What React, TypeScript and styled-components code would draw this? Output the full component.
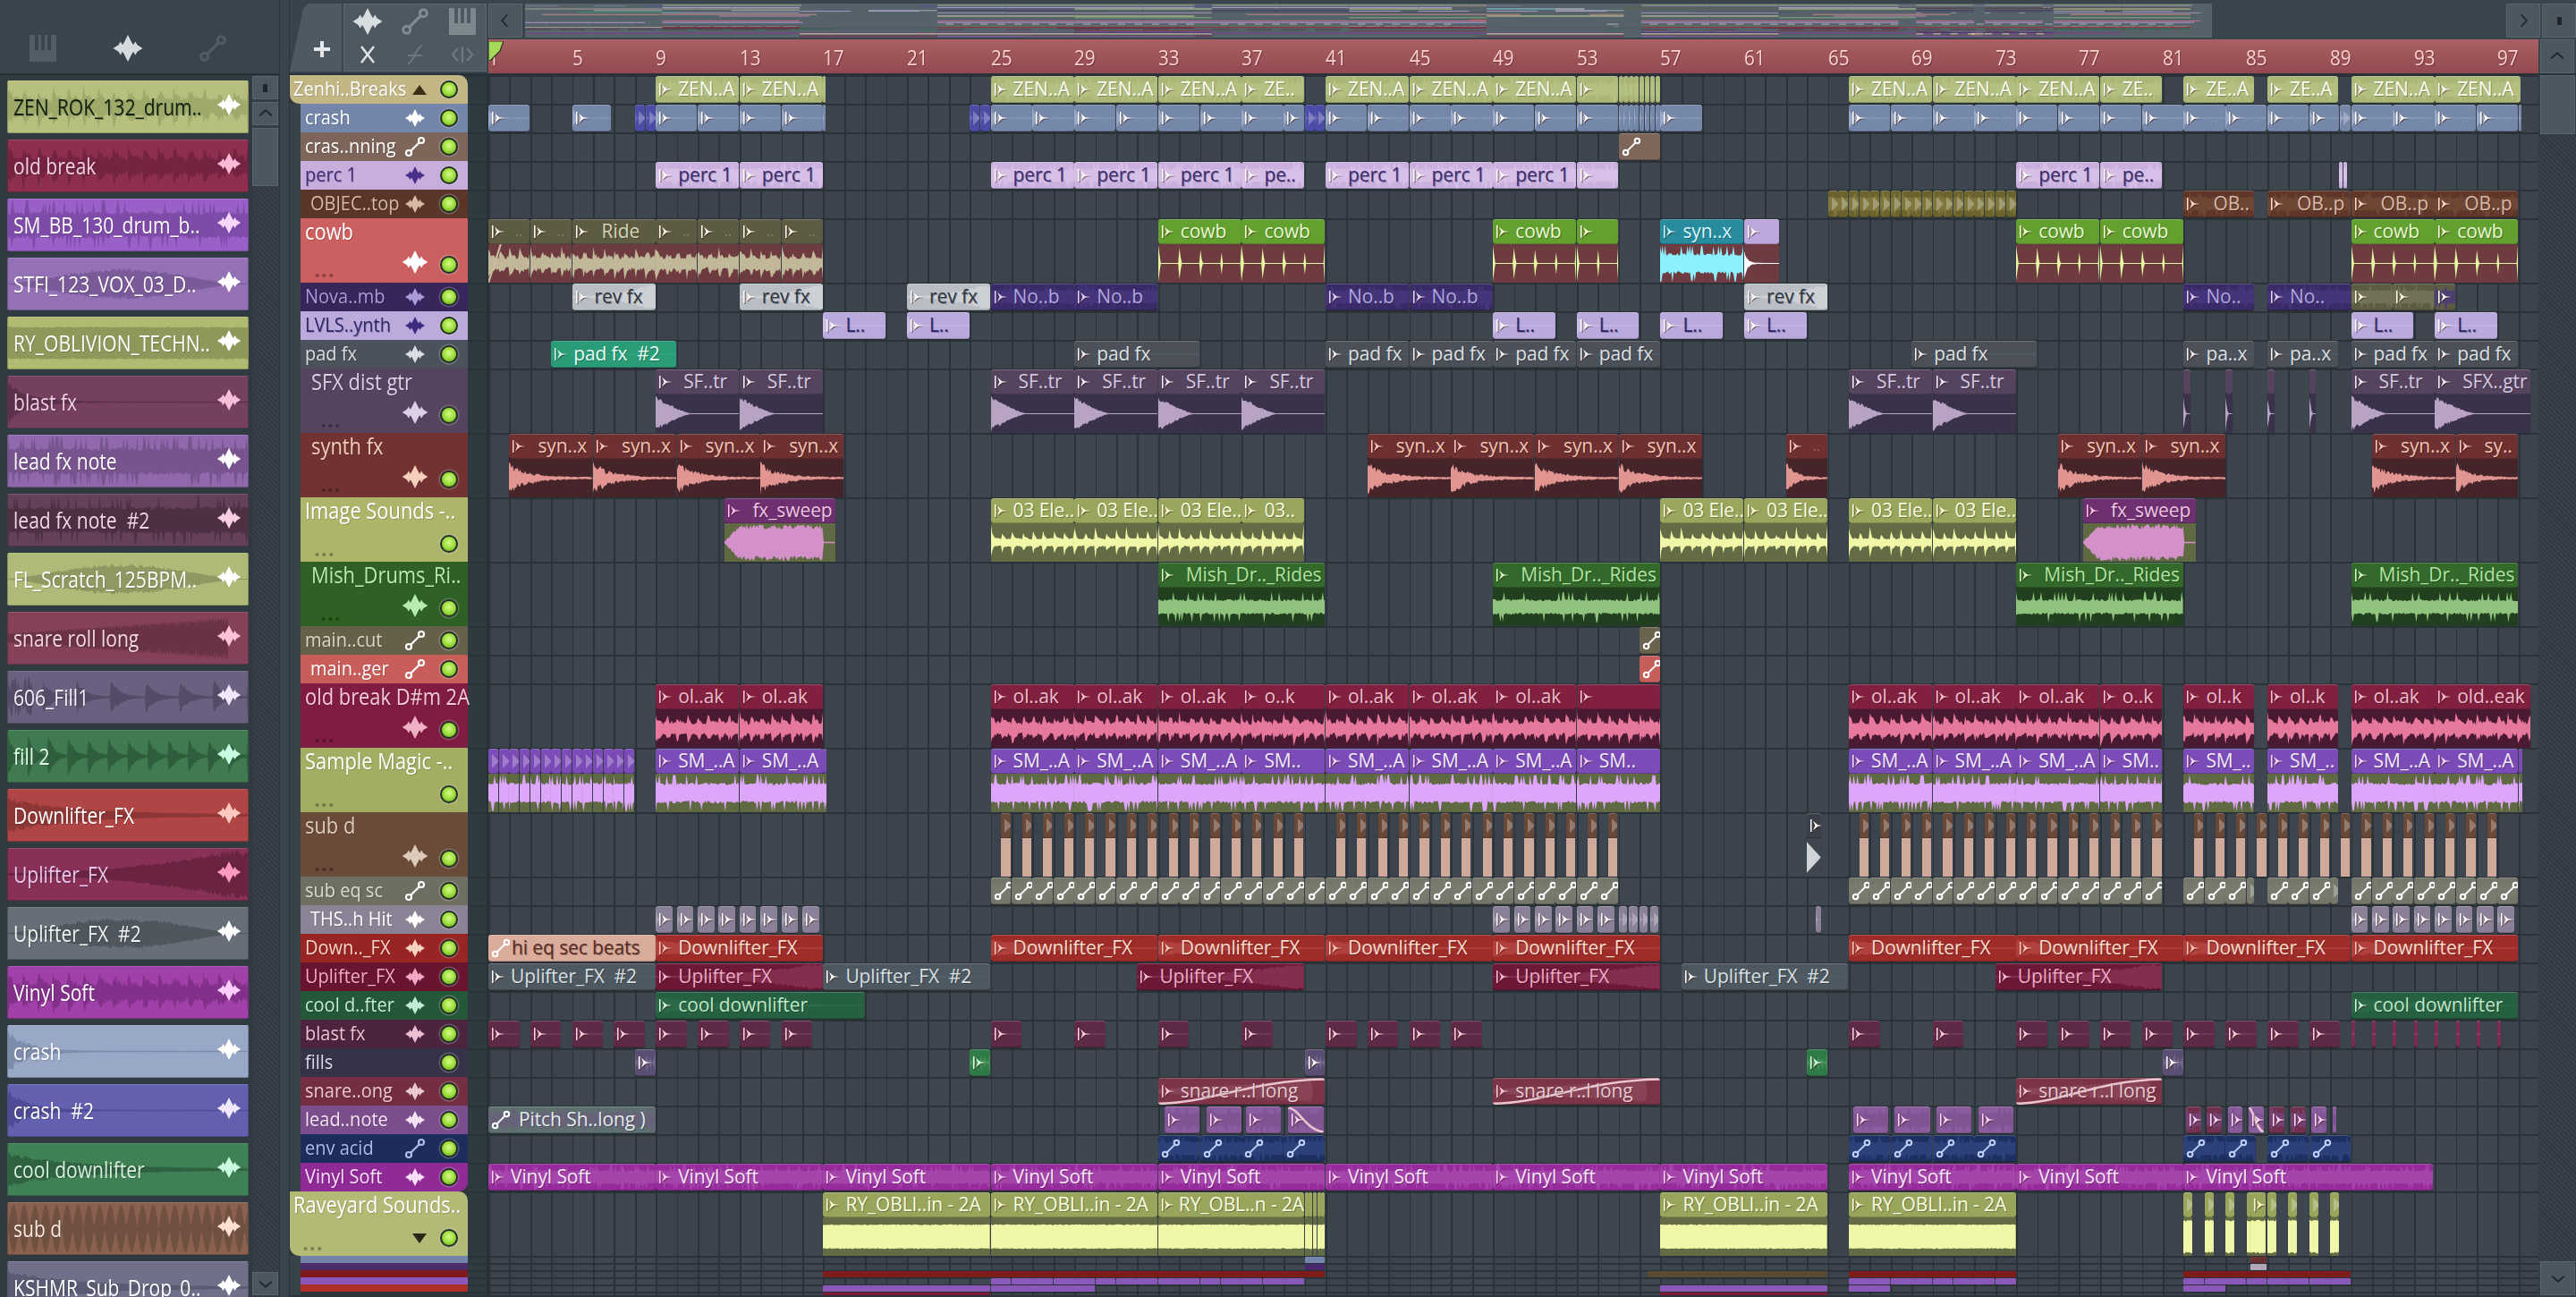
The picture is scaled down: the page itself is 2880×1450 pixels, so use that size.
import React from 'react';
import styled, { createGlobalStyle } from 'styled-components';

const W = 23.4;
const FONT = `"Open Sans", "Noto Sans", sans-serif`;

const Global = createGlobalStyle`
  html, body { margin: 0; padding: 0; background: #2c353c; overflow: hidden; }
  #root { width: 2880px; height: 1450px; }
`;

type Clip = { s: number; l: number; t?: string; c?: string; b?: string; w?: string; k?: string; wo?: number; fg?: string; ic?: string; auto?: boolean; curve?: string; pad?: number; };
type Track = { name: string; bg: string; fg: string; icon?: string; tint?: string; h: number; indent?: number; group?: string; round?: boolean; d?: Partial<Clip>; clips: Clip[]; };

const runs = (starts: number[], l: number, t?: string, o?: Partial<Clip>): Clip[] => starts.map((s) => ({ s, l, t, ...o }));
const fill = (from: number, to: number, step: number, t?: string, o?: Partial<Clip>, l?: number): Clip[] => {
  const out: Clip[] = [];
  for (let s = from; s < to - 0.001; s += step) out.push({ s, l: l ?? step, t, ...o });
  return out;
};

const rnd = (seed: number) => () => {
  seed = (seed + 0x6d2b79f5) | 0;
  let t = Math.imul(seed ^ (seed >>> 15), 1 | seed);
  t = (t + Math.imul(t ^ (t >>> 7), 61 | t)) ^ t;
  return ((t ^ (t >>> 14)) >>> 0) / 4294967296;
};

const ampOf = (k: string, x: number, r: number, bars: number) => {
  switch (k) {
    case 'noise': return 0.42 + 0.18 * r + (r > 0.84 ? 0.42 * r : 0);
    case 'mish': return 0.3 + 0.14 * r + (r > 0.9 ? 0.4 * r : 0);
    case 'pump': { const f = (x * bars * 2) % 1; return (0.34 + 0.66 * Math.exp(-f * 3)) * (0.5 + 0.5 * r); }
    case 'imgs': { const f = (x * bars * 2) % 1; return (0.24 + 0.76 * Math.exp(-f * 7)) * (0.65 + 0.35 * r); }
    case 'decay': return (0.025 + 0.97 * Math.max(0, 1 - x / 0.42) ** 1.3) * (0.72 + 0.28 * r);
    case 'crash': return (0.03 + 0.9 * Math.exp(-x * 12)) * (0.65 + 0.35 * r);
    case 'synth': return (0.06 + 0.88 * Math.exp(-x * 4.4)) * (0.45 + 0.55 * r);
    case 'thin': return 0.025;
    case 'rise': return Math.min(1, 0.06 + x * x * 1.1) * (0.75 + 0.25 * r);
    case 'bump': return Math.sin(Math.PI * Math.min(1, x * 1.05)) ** 1.4 * (0.75 + 0.25 * r) * 0.62 + 0.02;
    case 'sweep': return x > 0.89 ? 0.04 : Math.min(1, x * 7 + 0.05) * (0.72 + 0.28 * r);
    case 'block': return 0.62 + 0.05 * r;
    case 'solid': return 0.82 + 0.1 * r;
    case 'ticks': { const f = (x * bars) % 1; return f < 0.09 ? 0.95 * (1 - f * 9) + 0.03 : 0.03; }
    case 'fills': { const f = (x * 12) % 1; return (0.02 + 0.9 * Math.exp(-f * 3.2)) * (0.7 + 0.3 * r); }
    case 'bursts': { const f = (x * 7) % 1; return x < 0.1 ? 0.75 * r + 0.2 : (0.03 + 0.75 * Math.exp(-f * 4)) * (0.7 + 0.3 * r); }
    case 'sine': return Math.abs(Math.sin(x * 70)) * 0.98;
    case 'roll': return x > 0.92 ? 0 : (0.2 + x * 0.75) * (0.6 + 0.4 * Math.abs(Math.sin(x * 260)));
    case 'down': return (0.03 + 0.7 * Math.exp(-x * 3.2)) * (0.7 + 0.3 * r);
    default: return 0.5;
  }
};

const WaveSvg = styled.svg`
  position: absolute;
  inset: 0;
  width: 100%;
  height: 100%;
  display: block;
  pointer-events: none;
`;

const Wave = ({ k, color, px, seed, bars = 4, opacity = 1 }: { k: string; color: string; px: number; seed: number; bars?: number; opacity?: number }) => {
  const n = Math.max(4, Math.min(260, Math.round(px / 1.4)));
  const r = rnd(seed * 7919 + 13);
  let top = '';
  let bot = '';
  for (let i = 0; i <= n; i++) {
    const x = i / n;
    const a = Math.min(1, ampOf(k, x, r(), bars));
    const b = Math.min(1, ampOf(k, x, r(), bars));
    top += `L${(x * 100).toFixed(2)} ${(50 - a * 48).toFixed(1)}`;
    bot = `L${(x * 100).toFixed(2)} ${(50 + b * 48).toFixed(1)}` + bot;
  }
  return (
    <WaveSvg viewBox="0 0 100 100" preserveAspectRatio="none" opacity={opacity}>
      <path d={`M0 50${top}${bot}Z`} fill={color} />
    </WaveSvg>
  );
};

const ArrowGlyph = ({ color, size = 16 }: { color: string; size?: number }) => (
  <svg width={size} height={size} viewBox="0 0 16 16" style={{ flex: 'none', filter: 'drop-shadow(1px 1px 0 rgba(60,20,10,.55))' }}>
    <path d="M1 1 H2.6 V15 H1 Z" fill={color} />
    <path d="M4 2.8 L9.4 7.2 L15.5 8 L9.4 8.8 L4 13.2 L6.4 8 Z" fill={color} />
  </svg>
);

const AutoGlyph = ({ color, size = 22 }: { color: string; size?: number }) => (
  <svg width={size} height={size} viewBox="0 0 24 24" fill="none" stroke={color} strokeWidth={2.2} style={{ flex: 'none' }}>
    <circle cx="5" cy="19" r="3" />
    <circle cx="19" cy="5" r="3" />
    <path d="M7.2 16.8 L16.8 7.2" />
  </svg>
);

const SampleGlyph = ({ color, w = 22, h = 20 }: { color: string; w?: number; h?: number }) => (
  <svg width={w} height={h} viewBox="0 0 44 40" style={{ flex: 'none' }}>
    <path d="M0 20 L8 15 L11 10 L14 15 L17 10 L22 0 L27 10 L30 15 L33 10 L36 15 L44 20 L36 25 L33 30 L30 25 L27 30 L22 40 L17 30 L14 25 L11 30 L8 25 Z" fill={color} />
  </svg>
);

const PianoGlyph = ({ color, bg }: { color: string; bg: string }) => (
  <svg width="30" height="30" viewBox="0 0 30 30" style={{ flex: 'none' }}>
    <rect width="30" height="30" fill={color} />
    <rect x="6" y="0" width="4" height="17" fill={bg} />
    <rect x="13" y="0" width="4" height="17" fill={bg} />
    <rect x="20" y="0" width="4" height="17" fill={bg} />
  </svg>
);

const olive = { c: '#5d5b41', b: '#6e3b40', w: '#c0b898', k: 'pump', fg: '#d8d4b8', ic: '#fbfaf0' };
const cowG = { c: '#62a02f', b: '#6e3b40', w: '#e6f8a0', k: 'ticks', fg: '#e8f8d0', ic: '#f8ffd8' };
const subAuto = { auto: true };
const greyPad = { c: '#4b5059', fg: '#dde0e4', ic: '#eef0f2', w: '#697079', k: 'thin', wo: 0.9 };
const mutedCrash = { c: '#4a4ca6', w: '#6a6cc0', k: 'crash' };
const noB = { c: '#3a2a68', fg: '#b0a8e0', ic: '#d8d0f8', w: '#4a3880', k: 'noise' };
const rev = { c: '#b9bdc4', fg: '#2e3640', ic: '#fdfdfd', w: '#d2d5da', k: 'rise' };

const TRACKS: Track[] = [
  { name: 'Zenhi..Breaks', bg: '#c3b685', fg: '#fff', h: 32, group: 'up', d: { c: '#a9b676', w: '#bcc78a', k: 'noise', wo: 0.6, fg: '#fdfdf0', ic: '#fff' }, clips: [
    ...runs([8, 12], 4, 'ZEN..A'), { s: 16, l: 0.12 }, ...runs([24, 28, 32], 4, 'ZEN..A'), { s: 36, l: 3, t: 'ZE..' }, ...runs([40, 44, 48], 4, 'ZEN..A'), { s: 52, l: 2 }, ...fill(54, 56, 0.25),
    ...runs([65, 69, 73], 4, 'ZEN..A'), { s: 77, l: 3, t: 'ZE..' }, { s: 81, l: 3.4, t: 'ZE..A' }, { s: 85, l: 3.4, t: 'ZE..A' }, { s: 89, l: 4, t: 'ZEN..A' }, { s: 93, l: 4.1, t: 'ZEN..A' }] },
  { name: 'crash', bg: '#7485aa', fg: '#fff', h: 32, icon: 'wave', tint: '#fff', d: { c: '#7688aa', w: '#a4b2cc', k: 'crash', fg: '#a5b2cc', ic: '#fff' }, clips: [
    { s: 0, l: 2, t: '..' }, { s: 4, l: 1.9, t: '..' }, ...runs([7, 7.5, 23, 23.5, 39, 39.5], 0.5, undefined, mutedCrash), ...runs([8, 10, 12, 14, 24, 26, 28, 30, 32, 34, 36], 2, '..'), { s: 16, l: 0.1 }, { s: 38, l: 1 },
    ...runs([40, 42, 44, 46, 48, 50, 52], 2, '..'), ...fill(54, 56, 0.25), { s: 56, l: 2, t: '..' }, ...fill(65, 87, 2, '..'), { s: 87, l: 1.45 }, { s: 88.45, l: 0.55 }, ...fill(89, 97, 2, '..'), { s: 97, l: 0.1 }] },
  { name: 'cras..nning', bg: '#7d655a', fg: '#fff', h: 32, icon: 'auto', tint: '#fff', clips: [{ s: 54, l: 2, c: '#7e6659', auto: true, ic: '#fff' }] },
  { name: 'perc 1', bg: '#c7aedc', fg: '#3c2a78', h: 32, icon: 'wave', tint: '#4a2f8a', d: { c: '#c9b0df', w: '#dcc8ec', k: 'noise', wo: 0.7, fg: '#3a2a72', ic: '#fff' }, clips: [
    ...runs([8, 12, 24, 28, 32, 40, 44, 48, 73], 4, 'perc 1'), { s: 36, l: 3, t: 'pe..' }, { s: 52, l: 2 }, { s: 77, l: 3, t: 'pe..' }, { s: 88.4, l: 0.2 }, { s: 88.65, l: 0.2 }] },
  { name: 'OBJEC..top', bg: '#5a3529', fg: '#d8b9a6', h: 32, indent: 11, icon: 'wave', tint: '#d8b9a6', d: { c: '#60362a', w: '#744a38', k: 'noise', fg: '#d8b9a6', ic: '#ffd9c8', pad: 8 }, clips: [
    ...fill(64, 73, 0.5, undefined, { c: '#6a632e', w: '#857c40' }), { s: 81, l: 3.4, t: 'OB..' }, { s: 85, l: 4, t: 'OB..p' }, { s: 89, l: 4, t: 'OB..p' }, { s: 93, l: 4, t: 'OB..p' }] },
  { name: 'cowb', bg: '#cc6060', fg: '#fff', h: 72, icon: 'wave', tint: '#fff', d: olive, clips: [
    { s: 0, l: 2, t: '..', curve: 'slash' }, { s: 2, l: 2, t: '..' }, { s: 4, l: 4, t: 'Ride', pad: 8 }, ...runs([8, 10, 12, 14], 2, '..'),
    ...runs([32, 36, 48, 73, 77, 89, 93], 4, 'cowb', cowG), { s: 52, l: 2, ...cowG },
    { s: 56, l: 4, t: 'syn..x', c: '#288c9e', fg: '#d8f8ff', ic: '#c8f8ff', w: '#8df0ff', k: 'noise' }, { s: 60, l: 1.7, c: '#bea7dc', w: '#fff', k: 'crash', ic: '#fff' }] },
  { name: 'Nova..mb', bg: '#37255c', fg: '#aa9cd8', h: 32, icon: 'wave', tint: '#aa9cd8', d: noB, clips: [
    ...runs([4, 12, 20, 60], 4, 'rev fx', rev), ...runs([24, 28, 40, 44], 4, 'No..b'), { s: 81, l: 3.4, t: 'No..' }, { s: 85, l: 4, t: 'No..' },
    ...runs([89, 91], 2, undefined, { c: '#5c5c44', w: '#787860', ic: '#fdfde8' }), { s: 93, l: 1, c: '#5c5c44', ic: '#fdfde8' }] },
  { name: 'LVLS..ynth', bg: '#bbaadb', fg: '#2a2466', h: 32, icon: 'wave', tint: '#3c2c80', d: { c: '#b9a9dc', w: '#d2c6ea', k: 'crash', fg: '#2b2468', ic: '#fff' }, clips: runs([16, 20, 48, 52, 56, 60, 89, 93], 3, 'L..') },
  { name: 'pad fx', bg: '#4c525c', fg: '#dadde2', h: 32, icon: 'wave', tint: '#dadde2', d: greyPad, clips: [
    { s: 3, l: 6, t: 'pad fx  #2', c: '#2a9c78', fg: '#e8fff6', ic: '#c8fff0', w: '#46b892' }, { s: 28, l: 6, t: 'pad fx' }, ...runs([40, 44, 48, 52], 4, 'pad fx'), { s: 68, l: 6, t: 'pad fx' }, { s: 81, l: 3.4, t: 'pa..x' }, { s: 85, l: 3.4, t: 'pa..x' }, ...runs([89, 93], 4, 'pad fx')] },
  { name: 'SFX dist gtr', bg: '#56445f', fg: '#dccfe6', h: 72, indent: 12, icon: 'wave', tint: '#dccfe6', d: { c: '#56445f', b: '#39324a', w: '#b9a3c4', k: 'decay', fg: '#d6c9e2', ic: '#f4ecff', pad: 6 }, clips: [
    ...runs([8, 12, 24, 28, 32, 36, 65, 69, 89], 4, 'SF..tr'), { s: 93, l: 4.6, t: 'SFX..gtr' }, ...runs([81, 83, 85, 87], 0.35)] },
  { name: 'synth fx', bg: '#733232', fg: '#f4d0bc', h: 72, indent: 12, icon: 'wave', tint: '#f4d0bc', d: { c: '#6e3030', b: '#46252a', w: '#e29490', k: 'synth', fg: '#f0c4b4', ic: '#ffc8c0', pad: 7 }, clips: [
    ...runs([1, 5, 9, 13, 42, 46, 50, 54, 75, 79, 90], 4, 'syn..x'), { s: 62, l: 2, t: '..' }, { s: 94, l: 3, t: 'sy..' }] },
  { name: 'Image Sounds -..', bg: '#adb56a', fg: '#fff', h: 72, d: { c: '#9aa65c', b: '#646c45', w: '#f0f8a8', k: 'imgs', fg: '#f8fde0', ic: '#fdffd8' }, clips: [
    { s: 11.3, l: 5.3, t: 'fx_sweep', c: '#6e3070', fg: '#f0c4e4', ic: '#ffc0f0', w: '#d490c8', k: 'sweep', b: '#5f6a42', pad: 6 },
    ...runs([24, 28, 32, 56, 60, 65, 69], 4, '03 Ele..'), { s: 36, l: 3, t: '03..' },
    { s: 76.2, l: 5.4, t: 'fx_sweep', c: '#6e3070', fg: '#f0c4e4', ic: '#ffc0f0', w: '#d490c8', k: 'sweep', b: '#5f6a42', pad: 6 }] },
  { name: 'Mish_Drums_Ri..', bg: '#2f6024', fg: '#b8ecae', h: 72, indent: 12, icon: 'wave', tint: '#b8ecae', d: { c: '#33692a', b: '#22401f', w: '#90c47e', k: 'mish', fg: '#b0e4a0', ic: '#d0ffc0', pad: 6 }, clips: runs([32, 48, 73, 89], 8, 'Mish_Dr.._Rides') },
  { name: 'main..cut', bg: '#66604a', fg: '#dcd8c6', h: 32, icon: 'auto', tint: '#fff', clips: [{ s: 55, l: 1, c: '#6a644e', auto: true, ic: '#fff' }] },
  { name: 'main..ger', bg: '#c95d5a', fg: '#fff', h: 32, indent: 11, icon: 'auto', tint: '#fff', clips: [{ s: 55, l: 1, c: '#c65e5a', auto: true, ic: '#fff' }] },
  { name: 'old break D#m 2A', bg: '#801b41', fg: '#f4c8d4', h: 72, icon: 'wave', tint: '#f0b0c4', d: { c: '#822040', b: '#4a1a32', w: '#e6789c', k: 'pump', fg: '#f0bccc', ic: '#ffc0d8' }, clips: [
    ...runs([8, 12, 24, 28, 32, 40, 44, 48, 65, 69, 73, 89], 4, 'ol..ak'), { s: 36, l: 4, t: 'o..k' }, { s: 52, l: 4 }, { s: 77, l: 3, t: 'o..k' }, { s: 81, l: 3.4, t: 'ol..k' }, { s: 85, l: 3.4, t: 'ol..k' }, { s: 93, l: 4.6, t: 'old..eak' }] },
  { name: 'Sample Magic -..', bg: '#a3ae62', fg: '#fff', h: 72, d: { c: '#7b4cb8', b: '#5f6a42', w: '#dda6fa', k: 'noise', fg: '#f4e8ff', ic: '#f4d8ff' }, clips: [
    ...fill(0, 7, 0.5), ...runs([8, 12, 24, 28, 32, 40, 44, 48, 65, 69, 73, 89], 4, 'SM_..A'), ...runs([36, 52], 4, 'SM..'), { s: 16, l: 0.2 }, { s: 77, l: 3, t: 'SM..' }, { s: 81, l: 3.4, t: 'SM_..' }, { s: 85, l: 3.4, t: 'SM_..' }, { s: 93, l: 4, t: 'SM_..A' }, { s: 97, l: 0.2 }] },
  { name: 'sub d', bg: '#6a4a39', fg: '#dccabc', h: 72, icon: 'wave', tint: '#dccabc', d: { c: '#6a4838', b: '#cfa999', fg: '#fff', ic: '#92705c' }, clips: [
    ...fill(24.5, 39, 1, undefined, {}, 0.47), ...fill(40.5, 54, 1, undefined, {}, 0.47), ...fill(65.5, 80, 1, undefined, {}, 0.47), ...fill(81.5, 96, 1, undefined, {}, 0.47),
    { s: 63, l: 0.7, c: '#3b4048', b: '#3e4650', k: 'tri', ic: '#fff' }] },
  { name: 'sub eq sc', bg: '#6e6e62', fg: '#dcdcce', h: 32, icon: 'auto', tint: '#fff', d: { ...subAuto, c: '#74766a', ic: '#fff', w: '#85877a', k: 'noise', wo: 0.5 }, clips: [
    ...fill(24, 54, 1), ...fill(65, 80, 1), ...runs([81, 82, 83, 85, 86, 87], 1), ...runs([84, 88], 0.4), ...fill(89, 97, 1)] },
  { name: 'THS..h Hit', bg: '#8c8296', fg: '#fff', h: 32, indent: 11, icon: 'wave', tint: '#fff', d: { c: '#8a8198', ic: '#fff', w: '#aaa2b6', k: 'crash' }, clips: [
    ...fill(8, 16, 1, undefined, {}, 0.82), ...fill(48, 54, 1, undefined, {}, 0.82), ...fill(54, 56, 0.5, undefined, {}, 0.42), { s: 63.4, l: 0.3 }, ...fill(89, 97, 1, undefined, {}, 0.82)] },
  { name: 'Down.._FX', bg: '#982424', fg: '#f8d4c4', h: 32, icon: 'wave', tint: '#f8d4c4', d: { c: '#a02c2a', w: '#b84a44', k: 'down', wo: 0.7, fg: '#f8dccc', ic: '#ffc4b8' }, clips: [
    { s: 0, l: 8, t: 'hi eq sec beats', auto: true, c: '#d9ac9c', fg: '#5a2a22', ic: '#fff' }, ...runs([8, 24, 32, 40, 48, 65, 73, 81, 89], 8, 'Downlifter_FX')] },
  { name: 'Uplifter_FX', bg: '#6a1530', fg: '#f4a8c8', h: 32, icon: 'wave', tint: '#f4a8c8', d: { c: '#6e1838', w: '#8a3455', k: 'rise', fg: '#f0a8c4', ic: '#ffb8d8' }, clips: [
    ...runs([0, 16, 57], 8, 'Uplifter_FX  #2', { c: '#4e5860', w: '#667078', k: 'thin', fg: '#d8e0e4', ic: '#fff' }), ...runs([8, 31, 48, 72], 8, 'Uplifter_FX')] },
  { name: 'cool d..fter', bg: '#24583a', fg: '#c4ecd4', h: 32, icon: 'wave', tint: '#c4ecd4', d: { c: '#256040', w: '#2e6c48', k: 'down', fg: '#bfe8c8', ic: '#c8ffe0' }, clips: [{ s: 8, l: 10, t: 'cool downlifter' }, { s: 89, l: 8, t: 'cool downlifter' }] },
  { name: 'blast fx', bg: '#4d2440', fg: '#ecc0d0', h: 32, icon: 'wave', tint: '#ecc0d0', d: { c: '#5e2a48', ic: '#ffd0e0', w: '#a87090', k: 'thin' }, clips: [
    ...runs([0, 2, 4, 6, 8, 10, 12, 14, 24, 28, 32, 36, 40, 42, 44, 46, 65, 69, 73, 75, 77, 79, 81, 83, 85, 87], 1.5), ...fill(89, 97, 1, undefined, { c: '#7c2a50' }, 0.2)] },
  { name: 'fills', bg: '#363248', fg: '#dcdce4', h: 32, d: { c: '#5a4e72', ic: '#fff', w: '#7a6e92', k: 'fills' }, clips: [
    { s: 7, l: 1 }, { s: 23, l: 1, c: '#2f7a46', ic: '#d0ffe0', w: '#49995f' }, { s: 39, l: 1 }, { s: 63, l: 1, c: '#2f7a46', ic: '#d0ffe0', w: '#49995f' }, { s: 80, l: 1 }] },
  { name: 'snare..ong', bg: '#742e42', fg: '#ecc8d0', h: 32, icon: 'wave', tint: '#ecc8d0', d: { c: '#7c3448', w: '#8d4a5c', k: 'roll', fg: '#e8c8d0', ic: '#ffc8dc', curve: 'rise' }, clips: runs([32, 48, 73], 8, 'snare r..l long').map((c, i) => (i === 2 ? { ...c, l: 7 } : c)) },
  { name: 'lead..note', bg: '#7a4d8c', fg: '#f4e4f4', h: 32, icon: 'wave', tint: '#f4e4f4', d: { c: '#8b5c9e', ic: '#ffd8f8', w: '#7a4d8c', k: 'noise', wo: 0.6 }, clips: [
    { s: 0, l: 8, t: 'Pitch Sh..long )', auto: true, c: '#5e7070', fg: '#e4ecec', ic: '#fff', pad: 8 },
    { s: 32.3, l: 1.7 }, { s: 34.3, l: 1.7 }, { s: 36.2, l: 1.7 }, { s: 38.2, l: 1.75, curve: 'fall' }, { s: 65.2, l: 1.7 }, { s: 67.2, l: 1.7 }, { s: 69.2, l: 1.7 }, { s: 71.2, l: 1.7 },
    { s: 81.1, l: 0.75, c: '#70304e' }, { s: 82.1, l: 0.75, c: '#70304e' }, { s: 83.1, l: 0.75 }, { s: 84.1, l: 0.75, curve: 'fall' }, { s: 85.1, l: 0.75, c: '#70304e' }, { s: 86.1, l: 0.75, c: '#70304e' }, { s: 87.1, l: 0.75 }, { s: 88.1, l: 0.2 }] },
  { name: 'env acid', bg: '#1e2c5c', fg: '#aabbec', h: 32, icon: 'auto', tint: '#aabbec', d: { c: '#1e2f62', auto: true, ic: '#c0d0f8', w: '#3f5a9a', k: 'thinw', wo: 0.7 }, clips: [
    ...runs([32, 34, 36, 38, 65, 67, 69, 71, 81, 85, 87], 2), { s: 83, l: 1.45 }] },
  { name: 'Vinyl Soft', bg: '#8f2a96', fg: '#fbe0fb', h: 32, icon: 'wave', tint: '#fbe0fb', round: true, d: { c: '#962c9c', w: '#aa4cb0', k: 'noise', wo: 0.75, fg: '#fbe4fb', ic: '#ffd0ff' }, clips: [
    ...runs([0, 8, 16, 24, 32, 40, 48, 56, 65, 73], 8, 'Vinyl Soft'), { s: 81, l: 11.95, t: 'Vinyl Soft' }] },
  { name: 'Raveyard Sounds..', bg: '#b2ba75', fg: '#fff', h: 72, group: 'down', d: { c: '#9aa55c', b: '#646c45', w: '#f0f8a8', k: 'block', fg: '#f8fde0', ic: '#fdffd8' }, clips: [
    ...runs([16, 24, 56, 65], 8, 'RY_OBLI..in - 2A'), { s: 32, l: 7, t: 'RY_OBL..n - 2A', pad: -2 }, ...fill(39, 40, 0.2), ...fill(81, 89, 1, undefined, { k: 'solid' }, 0.45), ...runs([84.2], 0.75, undefined, { k: 'solid' })] },
  { name: '', bg: '#7384aa', fg: '#fff', h: 8, clips: [{ s: 39, l: 1, c: '#7587ac' }, { s: 84.2, l: 0.8, c: '#6a3030' }] },
  { name: '', bg: '#4a2c6a', fg: '#fff', h: 8, clips: [{ s: 39, l: 1, c: '#46286c' }, { s: 84.2, l: 0.8, c: '#b0a8b8' }] },
  { name: '', bg: '#7e1a1c', fg: '#fff', h: 8, clips: [{ s: 16, l: 24, c: '#7e1c1c' }, { s: 55.4, l: 8.6, c: '#5a4a35' }, { s: 65, l: 8, c: '#7e1c1c' }, { s: 81, l: 8, c: '#7e1c1c' }] },
  { name: '', bg: '#8a58b8', fg: '#fff', h: 8, clips: [...fill(24, 39, 1, undefined, { c: '#8a58b8' }), ...fill(65, 73, 1, undefined, { c: '#8a58b8' }), ...fill(81, 89, 1, undefined, { c: '#8a58b8' })] },
  { name: '', bg: '#ac3028', fg: '#fff', h: 8, clips: [...runs([16, 24], 8, undefined, { c: '#8a58b8' }).map((c, i) => (i === 1 ? { ...c, l: 5 } : c)), { s: 56, l: 8, c: '#8a58b8' }, { s: 65, l: 2, c: '#8a58b8' }, { s: 81, l: 2, c: '#8a58b8' }] },
  { name: '', bg: '#2c353c', fg: '#fff', h: 4, clips: [{ s: 16, l: 8, c: '#7c1c3a' }, { s: 56, l: 8, c: '#7c1c3a' }] },
];

const ITEMS = [
  ['ZEN_ROK_132_drum..', '#b7bf7f', '#9ea96a', 'pump', '#102010', '#fff'],
  ['old break', '#8f2f4f', '#742440', 'pump', '#f0d0e0', '#ffb8d8'],
  ['SM_BB_130_drum_b..', '#9a60c8', '#7e4ca8', 'noise', '#fff', '#f8d8ff'],
  ['STFI_123_VOX_03_D..', '#9470b5', '#7a5a98', 'bump', '#fff', '#fff'],
  ['RY_OBLIVION_TECHN..', '#b0ba70', '#8f985a', 'block', '#fff', '#fff'],
  ['blast fx', '#754060', '#5c304c', 'crash', '#f0d0e0', '#f8c0d8'],
  ['lead fx note', '#9068ac', '#78548f', 'noise', '#fff', '#fff'],
  ['lead fx note  #2', '#65405a', '#4e3044', 'noise', '#f0d8e8', '#f8d0e0'],
  ['FL_Scratch_125BPM..', '#b0ba78', '#8e9860', 'bump', '#fff', '#fff'],
  ['snare roll long', '#85405a', '#6a3246', 'roll', '#f4d8e0', '#ffc0d8'],
  ['606_Fill1', '#6a6080', '#544b66', 'bursts', '#f4f0fa', '#f0e8ff'],
  ['fill 2', '#3f7a50', '#2e5e3c', 'fills', '#e0ffe8', '#c8ffe0'],
  ['Downlifter_FX', '#b04545', '#8c3636', 'down', '#fff', '#ffc8c0'],
  ['Uplifter_FX', '#883055', '#6a2442', 'rise', '#e8c8ec', '#ff9cc0'],
  ['Uplifter_FX  #2', '#666e78', '#4e565e', 'bump', '#f0f4f0', '#fff'],
  ['Vinyl Soft', '#a040a8', '#82308a', 'pump', '#fff', '#ffd0ff'],
  ['crash', '#9aa8c8', '#7e8cac', 'crash', '#fff', '#fff'],
  ['crash  #2', '#6460b0', '#4e4a94', 'crash', '#fff', '#f0e8ff'],
  ['cool downlifter', '#408055', '#2f6240', 'down', '#d8f0dc', '#c8ffe0'],
  ['sub d', '#8a6050', '#705040', 'sine', '#f8e8e0', '#ffe0d0'],
  ['KSHMR_Sub_Drop_0..', '#70708a', '#5a5a72', 'down', '#fff', '#fff'],
];

const Page = styled.div`
  width: 2880px;
  height: 1450px;
  display: flex;
  background: #2c353c;
  font-family: ${FONT};
  overflow: hidden;
`;

const Browser = styled.aside`
  width: 312px;
  flex: none;
  display: flex;
  flex-direction: column;
`;

const BrowserBar = styled.div`
  flex: none;
  background: #3a444c;
  border-bottom: 2px solid #283138;
  display: grid;
  grid-template-columns: 95px 95px 95px;
  align-items: center;
  justify-items: center;
  padding-top: 26px;
  box-sizing: content-box;
  height: 56px;
`;

const Dim = styled.span<{ $o: number }>`
  display: flex;
  opacity: ${(p) => p.$o};
`;

const BrowserBody = styled.div`
  flex: 1;
  min-height: 0;
  display: flex;
`;

const ItemList = styled.div`
  width: 282px;
  flex: none;
  box-sizing: border-box;
  padding: 6px 4px 0 8px;
  display: flex;
  flex-direction: column;
  gap: 7px;
  overflow: hidden;
  background: #2f3a41;
`;

const Item = styled.div<{ $bg: string }>`
  position: relative;
  height: 59px;
  flex: none;
  box-sizing: border-box;
  background: ${(p) => p.$bg};
  border: 1px solid rgba(0, 0, 0, 0.22);
  border-top-color: rgba(255, 255, 255, 0.14);
  border-radius: 2px;
  display: flex;
  align-items: center;
  padding: 0 6px;
  overflow: hidden;
`;

const ItemName = styled.span<{ $fg: string }>`
  position: relative;
  display: block;
  flex: 1;
  min-width: 0;
  font-size: 26px;
  line-height: 30px;
  white-space: pre;
  color: ${(p) => p.$fg};
  transform: scaleX(0.81);
  transform-origin: left center;
  margin-top: -2px;
  text-shadow: 1px 1px 0 rgba(0, 0, 0, 0.18);
`;

const ItemIcon = styled.span`
  position: relative;
  display: flex;
  flex: none;
  margin-top: -6px;
`;

const Scroller = styled.div`
  width: 30px;
  flex: none;
  display: flex;
  flex-direction: column;
  gap: 3px;
  background: repeating-linear-gradient(45deg, #38414a 0 2px, #313a41 2px 4px);
  padding: 1px 1px 2px 0;
  box-sizing: border-box;
`;

const ScrollBtn = styled.div<{ $h: number; $grow?: boolean }>`
  height: ${(p) => p.$h}px;
  flex: none;
  box-sizing: border-box;
  background: #4d5760;
  border: 1px solid #5a646d;
  display: flex;
  align-items: center;
  justify-content: center;
  margin-top: ${(p) => (p.$grow ? 'auto' : '0')};
`;

const Splitter = styled.div`
  width: 12px;
  flex: none;
  background: #39444c;
  border-left: 1px solid #2b343b;
  border-right: 1px solid #2b343b;
  box-sizing: border-box;
`;

const Playlist = styled.main`
  flex: 1;
  min-width: 0;
  display: flex;
  flex-direction: column;
`;

const TopArea = styled.div`
  height: 84px;
  flex: none;
  display: flex;
  background: #3a444c;
`;

const TabGroup = styled.div`
  width: 222px;
  flex: none;
  display: flex;
  gap: 2px;
  padding-top: 4px;
  padding-bottom: 2px;
  box-sizing: border-box;
  background: #39434b;
  border-bottom: 2px solid #283138;
`;

const AddTab = styled.div`
  width: 58px;
  flex: none;
  background: #4f5962;
  clip-path: polygon(36% 0, 100% 0, 100% 100%, 0 100%, 3% 88%, 26% 8%);
  display: flex;
  align-items: flex-end;
  justify-content: center;
  padding-bottom: 16px;
  box-sizing: border-box;
  padding-left: 14px;
`;

const ToolGrid = styled.div`
  flex: 1;
  background: #4e5861;
  border: 1px solid #5b656e;
  box-sizing: border-box;
  display: grid;
  grid-template-columns: repeat(3, 1fr);
  grid-template-rows: 1fr 1fr;
  align-items: center;
  justify-items: center;
  margin-right: 2px;
`;

const StripCol = styled.div`
  flex: 1;
  min-width: 0;
  display: flex;
  flex-direction: column;
`;

const MiniRow = styled.div`
  height: 44px;
  flex: none;
  display: flex;
  box-sizing: border-box;
  padding-top: 4px;
  padding-bottom: 2px;
  gap: 2px;
`;

const SquareBtn = styled.div`
  width: 38px;
  flex: none;
  box-sizing: border-box;
  background: #4d5760;
  border: 1px solid #5a646d;
  display: flex;
  align-items: center;
  justify-content: center;
`;

const Mini = styled.svg`
  width: 1886px;
  height: 38px;
  flex: none;
  display: block;
  background: #55626a;
  margin-left: 1px;
`;

const MiniVoid = styled.div`
  flex: 1;
`;

const RulerRow = styled.div`
  height: 40px;
  flex: none;
  display: flex;
  gap: 2px;
  border-bottom: 2px solid #283138;
  box-sizing: border-box;
`;

const Ruler = styled.div`
  position: relative;
  width: 2292px;
  flex: none;
  background: linear-gradient(#aa6064, #924a50);
  display: flex;
  align-items: center;
  overflow: hidden;
`;

const RulerNum = styled.span`
  width: ${W * 4}px;
  flex: none;
  font-size: 23px;
  line-height: 30px;
  color: #f9d2cb;
  text-shadow: 1px 1px 0 rgba(80, 20, 30, 0.5);
  padding-top: 1px;
  transform: scaleX(0.9);
  transform-origin: left center;
`;

const PlayMarker = styled.svg`
  position: absolute;
  left: 0;
  top: 2px;
  width: 17px;
  height: 22px;
`;

const Tracks = styled.div`
  flex: 1;
  min-height: 0;
  display: flex;
`;

const TrackStack = styled.div`
  flex: none;
  width: 2514px;
  display: flex;
  flex-direction: column;
  overflow: hidden;
`;

const Row = styled.div<{ $h: number }>`
  height: ${(p) => p.$h}px;
  flex: none;
  display: flex;
`;

const LeftGap = styled.div`
  width: 12px;
  flex: none;
  background: #384249;
`;

const Label = styled.div<{ $bg: string; $fg: string; $indent: number; $tall: boolean; $group?: string; $round?: boolean; $w: number }>`
  width: ${(p) => p.$w}px;
  flex: none;
  box-sizing: border-box;
  background: ${(p) => p.$bg};
  color: ${(p) => p.$fg};
  padding-left: ${(p) => p.$indent}px;
  padding-right: 11px;
  display: flex;
  flex-direction: ${(p) => (p.$tall ? 'column' : 'row')};
  align-items: ${(p) => (p.$tall ? 'stretch' : 'center')};
  border-top-right-radius: ${(p) => (p.$group ? 10 : 0)}px;
  border-bottom-left-radius: ${(p) => (p.$group ? 10 : 0)}px;
  border-bottom-right-radius: ${(p) => (p.$round ? 10 : 0)}px;
  position: relative;
`;

const LabelText = styled.span<{ $tall: boolean }>`
  display: block;
  flex: ${(p) => (p.$tall ? 'none' : 1)};
  min-width: 0;
  font-size: ${(p) => (p.$tall ? 25 : 21.5)}px;
  line-height: 32px;
  margin-top: -2px;
  white-space: pre;
  transform: scaleX(${(p) => (p.$tall ? 0.875 : 0.93)});
  transform-origin: left center;
  text-shadow: 1px 1px 0 rgba(0, 0, 0, 0.18);
`;

const LabelFoot = styled.div`
  flex: 1;
  display: flex;
  align-items: center;
  padding-top: 2px;
`;

const Dots = styled.span`
  font-size: 24px;
  line-height: 24px;
  font-weight: 700;
  letter-spacing: 1px;
  color: rgba(0, 0, 0, 0.32);
  margin-left: 10px;
  margin-right: auto;
  align-self: flex-end;
  padding-bottom: 3px;
`;

const IconSlot = styled.span<{ $tall: boolean }>`
  width: ${(p) => (p.$tall ? 32 : 24)}px;
  flex: none;
  display: flex;
  align-items: center;
  justify-content: center;
  margin-right: ${(p) => (p.$tall ? 12 : 16)}px;
  margin-top: ${(p) => (p.$tall ? -6 : 0)}px;
`;

const Led = styled.span`
  width: 20px;
  height: 20px;
  flex: none;
  border-radius: 50%;
  box-sizing: border-box;
  background: radial-gradient(circle at 50% 42%, #d8f888 0%, #a0e040 48%, #5aa014 100%);
  border: 2px solid #263026;
  box-shadow: 0 0 0 1.5px rgba(200, 210, 200, 0.28);
`;

const Fold = styled.span<{ $down?: boolean }>`
  width: 0;
  height: 0;
  flex: none;
  border-left: 8px solid transparent;
  border-right: 8px solid transparent;
  ${(p) => (p.$down ? 'border-top: 11px solid #28281a;' : 'border-bottom: 11px solid #3a2f14;')}
  margin-right: 15px;
`;

const Gutter = styled.div`
  width: 23px;
  flex: none;
  background: #2e3940;
  box-shadow: inset 0 2px 0 #28323a;
  border-right: 2px solid #283138;
  box-sizing: border-box;
`;

const Lane = styled.div`
  position: relative;
  flex: 1;
  min-width: 0;
  background-color: #3e4650;
  background-image:
    linear-gradient(#2a3238 0 2px, transparent 2px),
    repeating-linear-gradient(90deg, #2b333a 0 1.8px, transparent 1.8px ${W}px),
    repeating-linear-gradient(90deg, rgba(0, 0, 0, 0.045) 0 ${W * 4}px, rgba(255, 255, 255, 0) ${W * 4}px ${W * 8}px);
`;

const ClipBox = styled.div<{ $top: number; $h: number }>`
  position: absolute;
  top: ${(p) => p.$top}px;
  height: ${(p) => p.$h}px;
  display: flex;
  flex-direction: column;
`;

const ClipHead = styled.div<{ $c: string; $h: number; $fg: string; $flat: boolean }>`
  position: relative;
  height: ${(p) => p.$h}px;
  flex: none;
  background: ${(p) => p.$c};
  color: ${(p) => p.$fg};
  border-radius: ${(p) => (p.$flat ? 1 : 3)}px;
  box-shadow: ${(p) => (p.$flat ? 'none' : 'inset 0 1px 0 rgba(255,255,255,.2), inset 0 -1px 0 rgba(0,0,0,.18), 0 1px 1px rgba(0,0,0,.35)')};
  overflow: hidden;
  display: flex;
  align-items: center;
  padding-left: 3px;
  box-sizing: border-box;
  font-size: 21px;
  line-height: 28px;
  white-space: pre;
`;

const ClipText = styled.span<{ $pad: number; $dim: boolean }>`
  position: relative;
  margin-left: ${(p) => p.$pad}px;
  margin-top: -3px;
  letter-spacing: -0.1px;
  ${(p) => (p.$dim ? 'margin-left: auto; margin-right: 8px; opacity: .35; font-size: 16px;' : '')}
  text-shadow: 1px 1px 0 rgba(0, 0, 0, 0.3);
`;

const GlyphSlot = styled.span`
  position: relative;
  display: flex;
  flex: none;
`;

const GhostTri = styled.span`
  position: relative;
  width: 0;
  height: 0;
  margin-left: 1px;
  flex: none;
  border-top: 8px solid transparent;
  border-bottom: 8px solid transparent;
  border-left: 8px solid rgba(255, 255, 255, 0.28);
`;

const ClipBody = styled.div<{ $b: string }>`
  position: relative;
  flex: 1;
  background: ${(p) => p.$b};
  overflow: hidden;
  box-shadow: 0 1px 1px rgba(0, 0, 0, 0.3);
`;

const SideCol = styled.div`
  flex: 1;
  min-width: 0;
  display: flex;
  flex-direction: column;
  background: repeating-linear-gradient(45deg, #38414a 0 2px, #313a41 2px 4px);
  padding: 0 1px 2px 2px;
  box-sizing: border-box;
`;

const Chevron = ({ dir, color = '#1e262c', size = 18 }: { dir: 'l' | 'r' | 'u' | 'd'; color?: string; size?: number }) => {
  const pts = { l: '15,3 7,12 15,21', r: '9,3 17,12 9,21', u: '3,15 12,7 21,15', d: '3,9 12,17 21,9' }[dir];
  return (
    <svg width={size} height={size} viewBox="0 0 24 24" fill="none" stroke={color} strokeWidth={2.4}>
      <polyline points={pts} />
    </svg>
  );
};

const CurveSvg = ({ kind }: { kind: string }) => {
  const d = kind === 'rise' ? 'M0 96 C 30 96, 55 10, 100 5' : kind === 'fall' ? 'M0 5 C 30 5, 50 90, 100 95' : 'M0 100 L 30 0';
  return (
    <WaveSvg viewBox="0 0 100 100" preserveAspectRatio="none">
      <path d={d} fill="none" stroke={kind === 'slash' ? '#c8bd9c' : '#eac4cf'} strokeWidth={kind === 'slash' ? 2.2 : 2.6} vectorEffect="non-scaling-stroke" />
    </WaveSvg>
  );
};

const MiniMap = () => {
  const rows: React.ReactNode[] = [];
  let y = 0;
  TRACKS.forEach((t, i) => {
    const yy = 1.5 + (y / 1364) * 35;
    const d = t.d || {};
    t.clips.forEach((c, j) => {
      const color = (t.h === 72 ? c.w || d.w : c.c || d.c) || '#ccc';
      rows.push(<rect key={`${i}-${j}`} x={c.s * 19.2} y={yy} width={c.l * 19.2 - 0.4} height={0.75} fill={color} />);
    });
    y += t.h;
  });
  return <Mini viewBox="0 0 1886 38" preserveAspectRatio="none">{rows}</Mini>;
};

const ClipView = ({ clip, track, seed }: { clip: Clip; track: Track; seed: number }) => {
  const c = { ...track.d, ...clip } as Clip;
  const tall = track.h === 72;
  const thin = track.h <= 8;
  const px = c.l * W;
  const head = tall ? 28 : thin ? track.h - 1 : 30;
  const headColor = c.c || track.bg;
  const showIcon = !thin && px >= 16;
  const dim = c.t === '..';
  const iconColor = c.ic || '#fff';
  const label = c.t && px > 30 ? c.t : undefined;
  const wave = c.w && c.k && c.k !== 'tri' && c.k !== 'thinw';
  return (
    <ClipBox $top={thin ? 0.5 : 1} $h={track.h - 1} style={{ left: c.s * W, width: px - 0.6 }}>
      <ClipHead $c={headColor} $h={head} $fg={c.fg || '#fff'} $flat={thin}>
        {!tall && wave && !c.auto && <Wave k={c.k!} color={c.w!} px={px} seed={seed} bars={c.l} opacity={c.wo ?? 0.8} />}
        {c.auto && c.k === 'thinw' && <Wave k="noise" color={c.w!} px={px} seed={seed} opacity={0.45} />}
        {c.auto && c.k === 'noise' && <Wave k="noise" color={c.w!} px={px} seed={seed} opacity={0.35} />}
        {c.curve && !tall && <CurveSvg kind={c.curve} />}
        {showIcon && (c.auto ? <GlyphSlot><AutoGlyph color={iconColor} size={22} /></GlyphSlot> : <GlyphSlot><ArrowGlyph color={iconColor} /></GlyphSlot>)}
        {!thin && !showIcon && px >= 9 && <GhostTri />}
        {label && <ClipText $pad={(c.auto ? 1 : 6) + (c.pad || 0)} $dim={dim}>{label}</ClipText>}
      </ClipHead>
      {tall && (
        <ClipBody $b={c.b || '#444'}>
          {c.k === 'tri' ? (
            <WaveSvg viewBox="0 0 100 100" preserveAspectRatio="none"><path d="M0 10 L100 50 L0 90Z" fill="#d0d4d8" /></WaveSvg>
          ) : (
            c.w && c.k && <Wave k={c.k} color={c.w} px={px} seed={seed + 5} bars={c.l} />
          )}
          {c.curve && <CurveSvg kind={c.curve} />}
        </ClipBody>
      )}
    </ClipBox>
  );
};

const TrackLabel = ({ t }: { t: Track }) => {
  const tall = t.h === 72;
  const indent = t.group ? 4 : t.indent ?? 5;
  const width = t.group ? 199 : 187;
  if (t.h <= 8) return <><LeftGap /><Label $bg={t.bg} $fg={t.fg} $indent={0} $tall={false} $w={187} /></>;
  const icon =
    t.icon === 'wave' ? <SampleGlyph color={t.tint || '#fff'} w={tall ? 30 : 22} h={tall ? 26 : 20} /> :
    t.icon === 'auto' ? <AutoGlyph color={t.tint || '#fff'} size={24} /> : null;
  if (tall) {
    return (
      <>
        {!t.group && <LeftGap />}
        <Label $bg={t.bg} $fg={t.fg} $indent={indent} $tall $group={t.group} $w={width}>
          <LabelText $tall>{t.name}</LabelText>
          <LabelFoot>
            <Dots>...</Dots>
            {t.group ? <Fold $down /> : <IconSlot $tall>{icon}</IconSlot>}
            <Led />
          </LabelFoot>
        </Label>
      </>
    );
  }
  return (
    <>
      {!t.group && <LeftGap />}
      <Label $bg={t.bg} $fg={t.fg} $indent={indent} $tall={false} $group={t.group} $round={t.round} $w={width}>
        <LabelText $tall={false}>{t.name}</LabelText>
        {t.group ? <Fold /> : <IconSlot $tall={false}>{icon}</IconSlot>}
        <Led />
      </Label>
    </>
  );
};

export default function App() {
  const nums: number[] = [];
  for (let n = 1; n <= 97; n += 4) nums.push(n);
  let seed = 1;
  return (
    <Page>
      <Global />
      <Browser>
        <BrowserBar>
          <Dim $o={0.3}><PianoGlyph color="#8e989f" bg="#3a444c" /></Dim>
          <Dim $o={1}><SampleGlyph color="#d5dade" w={38} h={30} /></Dim>
          <Dim $o={0.22}><AutoGlyph color="#aab4bb" size={32} /></Dim>
        </BrowserBar>
        <BrowserBody>
          <ItemList>
            {ITEMS.map(([name, bg, wc, kind, fg, ic], i) => (
              <Item key={i} $bg={bg}>
                <Wave k={kind} color={wc} px={268} seed={i + 300} bars={8} />
                <ItemName $fg={fg}>{name}</ItemName>
                <ItemIcon><SampleGlyph color={ic} w={30} h={24} /></ItemIcon>
              </Item>
            ))}
          </ItemList>
          <Scroller>
            <ScrollBtn $h={26}><svg width="5" height="9"><rect width="5" height="9" fill="#1e262c" /></svg></ScrollBtn>
            <ScrollBtn $h={26}><Chevron dir="u" /></ScrollBtn>
            <ScrollBtn $h={65} />
            <ScrollBtn $h={26} $grow><Chevron dir="d" /></ScrollBtn>
          </Scroller>
        </BrowserBody>
      </Browser>
      <Splitter />
      <Playlist>
        <TopArea>
          <TabGroup>
            <AddTab>
              <svg width="18" height="18" viewBox="0 0 18 18"><path d="M7 0h4v7h7v4h-7v7H7v-7H0V7h7z" fill="#e4e8ea" /></svg>
            </AddTab>
            <ToolGrid>
              <SampleGlyph color="#d8dde0" w={40} h={30} />
              <AutoGlyph color="#828c93" size={32} />
              <PianoGlyph color="#7d878e" bg="#4e5861" />
              <svg width="18" height="22" viewBox="0 0 18 22" fill="none" stroke="#e2e6e8" strokeWidth={2.4}><path d="M2 2 L16 20 M16 2 L2 20" /></svg>
              <svg width="20" height="24" viewBox="0 0 20 24" fill="none" stroke="#6d777e" strokeWidth={2}><path d="M2 22 C 8 22, 12 2, 18 2" /><path d="M2 13h16" /></svg>
              <svg width="24" height="18" viewBox="0 0 24 18" fill="none" stroke="#6d777e" strokeWidth={2.4}><path d="M7 2 L1 9 L7 16 M17 2 L23 9 L17 16 M12 0 V18" /></svg>
            </ToolGrid>
          </TabGroup>
          <StripCol>
            <MiniRow>
              <SquareBtn><Chevron dir="l" /></SquareBtn>
              <MiniMap />
              <MiniVoid />
              <SquareBtn><Chevron dir="r" /></SquareBtn>
              <SquareBtn><svg width="5" height="9"><rect width="5" height="9" fill="#1e262c" /></svg></SquareBtn>
            </MiniRow>
            <RulerRow>
              <Ruler>
                {nums.map((n) => <RulerNum key={n}>{n}</RulerNum>)}
                <PlayMarker viewBox="0 0 17 22"><path d="M0 0 H17 L13 11 L2 22 H0 Z" fill="#a6d85a" stroke="#27301c" strokeWidth={1.2} /></PlayMarker>
              </Ruler>
              <SquareBtn><Chevron dir="u" /></SquareBtn>
            </RulerRow>
          </StripCol>
        </TopArea>
        <Tracks>
          <TrackStack>
            {TRACKS.map((t, i) => (
              <Row key={i} $h={t.h}>
                <TrackLabel t={t} />
                <Gutter />
                <Lane>
                  {t.clips.map((c, j) => <ClipView key={j} clip={c} track={t} seed={seed++} />)}
                </Lane>
              </Row>
            ))}
          </TrackStack>
          <SideCol>
            <ScrollBtn $h={66} />
            <ScrollBtn $h={38} $grow><Chevron dir="d" /></ScrollBtn>
          </SideCol>
        </Tracks>
      </Playlist>
    </Page>
  );
}
